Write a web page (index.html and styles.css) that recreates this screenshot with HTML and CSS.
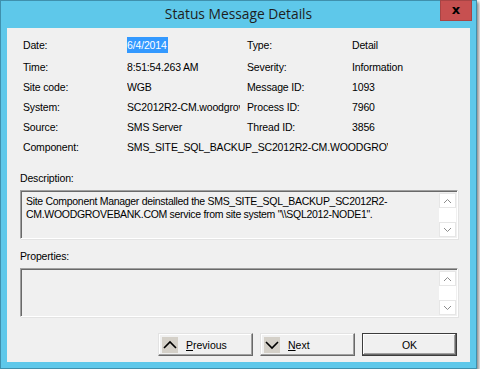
FILE: index.html
```html
<!DOCTYPE html>
<html lang="en">
  <head>
    <meta charset="UTF-8" />
    <title>Status Message Details</title>
    <link rel="stylesheet" href="styles.css">
  </head>
  <body>
    <div class="window">
      <div class="titlebar">
        <span class="title">Status Message Details</span>
        <span class="close-btn">x</span>
      </div>

      <div class="client">
        <div class="fields">
          <span class="label">Date:</span>
          <span class="value"><span class="selected">6/4/2014</span></span>
          <span class="label">Type:</span>
          <span class="value">Detail</span>

          <span class="label">Time:</span>
          <span class="value">8:51:54.263 AM</span>
          <span class="label">Severity:</span>
          <span class="value">Information</span>

          <span class="label">Site code:</span>
          <span class="value">WGB</span>
          <span class="label">Message ID:</span>
          <span class="value">1093</span>

          <span class="label">System:</span>
          <span class="value">SC2012R2-CM.woodgrovebank.com</span>
          <span class="label">Process ID:</span>
          <span class="value">7960</span>

          <span class="label">Source:</span>
          <span class="value">SMS Server</span>
          <span class="label">Thread ID:</span>
          <span class="value">3856</span>

          <span class="label">Component:</span>
          <span class="value wide">SMS_SITE_SQL_BACKUP_SC2012R2-CM.WOODGROVEBANK.COM</span>
        </div>

        <div class="section-label">Description:</div>
        <div class="textbox">
          <div class="textbox-text">
            Site Component Manager deinstalled the SMS_SITE_SQL_BACKUP_SC2012R2-CM.WOODGROVEBANK.COM service from site system "\\SQL2012-NODE1".
          </div>
          <div class="scrollbar">
            <span class="scroll-btn">
              <svg width="9" height="6" viewBox="0 0 9 6"><path d="M1 5 L4.5 1.5 L8 5" fill="none" stroke="#8c8c8c" stroke-width="1"/></svg>
            </span>
            <span class="scroll-track"></span>
            <span class="scroll-btn">
              <svg width="9" height="6" viewBox="0 0 9 6"><path d="M1 1 L4.5 4.5 L8 1" fill="none" stroke="#8c8c8c" stroke-width="1"/></svg>
            </span>
          </div>
        </div>

        <div class="section-label">Properties:</div>
        <div class="textbox">
          <div class="textbox-text"></div>
          <div class="scrollbar">
            <span class="scroll-btn">
              <svg width="9" height="6" viewBox="0 0 9 6"><path d="M1 5 L4.5 1.5 L8 5" fill="none" stroke="#8c8c8c" stroke-width="1"/></svg>
            </span>
            <span class="scroll-track"></span>
            <span class="scroll-btn">
              <svg width="9" height="6" viewBox="0 0 9 6"><path d="M1 1 L4.5 4.5 L8 1" fill="none" stroke="#8c8c8c" stroke-width="1"/></svg>
            </span>
          </div>
        </div>

        <div class="buttons">
          <button class="btn nav-btn">
            <span class="btn-icon">
              <svg width="16" height="16" viewBox="0 0 16 16"><path d="M2 11 L8 5 L14 11" fill="none" stroke="#000" stroke-width="1.6"/></svg>
            </span>
            <span><u>P</u>revious</span>
          </button>
          <button class="btn nav-btn">
            <span class="btn-icon">
              <svg width="16" height="16" viewBox="0 0 16 16"><path d="M2 5 L8 11 L14 5" fill="none" stroke="#000" stroke-width="1.6"/></svg>
            </span>
            <span><u>N</u>ext</span>
          </button>
          <button class="btn default-btn">OK</button>
        </div>
      </div>
    </div>
  </body>
</html>
```

FILE: styles.css
```css
* {
  margin: 0;
  padding: 0;
  box-sizing: border-box;
}

body {
  background: #ffffff;
  font-family: "Liberation Sans", Arial, sans-serif;
  font-size: 10.5px;
  letter-spacing: -0.15px;
  color: #000;
}

/* Window frame */
.window {
  width: 477px;
  height: 369px;
  border: 1px solid #3f90ad;
  background: #5ec8ea;
  padding: 27px 6px 6px 6px;
  position: relative;
  box-shadow: 2px 2px 3px rgba(0, 0, 0, 0.45);
}

.titlebar {
  position: absolute;
  top: 0;
  left: 0;
  right: 0;
  height: 27px;
  display: flex;
  align-items: center;
  justify-content: center;
}

.title {
  font-family: "Open Sans", "Noto Sans", sans-serif;
  font-size: 13.8px;
  letter-spacing: 0;
  color: #1e1e1e;
  margin-top: -2px;
}

.close-btn {
  position: absolute;
  top: -1px;
  right: 4px;
  width: 32px;
  height: 21px;
  background: #c75050;
  border: 1px solid #a84444;
  color: #000;
  font-family: "DejaVu Sans", sans-serif;
  font-weight: bold;
  font-size: 13px;
  letter-spacing: 0;
  line-height: 17px;
  text-align: center;
}

/* Client area */
.client {
  height: 100%;
  background: #f0f0f0;
  padding: 7px 12px 0 13px;
  display: flex;
  flex-direction: column;
}

.fields {
  display: grid;
  grid-template-columns: 104px 120px 105px 1fr;
  grid-template-rows: 22px repeat(5, 20px);
  line-height: 20px;
  padding-left: 3px;
}

.value {
  white-space: nowrap;
  overflow: hidden;
  max-width: 113px;
}

.wide {
  grid-column: 2 / span 3;
  max-width: none;
  width: 261px;
}

.selected {
  background: #3399ff;
  color: #fff;
  padding: 2px 1px 2px 0;
}

.section-label {
  line-height: 14px;
  margin-top: 14px;
  margin-bottom: 5px;
}

.section-label + .textbox + .section-label {
  margin-top: 10px;
}

.textbox {
  height: 49px;
  border-top: 1px solid #a0a0a0;
  border-left: 1px solid #a0a0a0;
  border-right: 1px solid #ffffff;
  border-bottom: 1px solid #ffffff;
  box-shadow: inset 1px 1px 0 #696969, 1px 1px 0 #e3e3e3;
  display: flex;
  padding: 2px 1px 1px 2px;
}

.textbox-text {
  flex: 1;
  padding: 2px 3px;
  line-height: 13px;
  letter-spacing: -0.3px;
}

.scrollbar {
  width: 17px;
  display: flex;
  flex-direction: column;
  background: #ffffff;
}

.scroll-btn {
  height: 15px;
  border: 1px solid #e6e6e6;
  display: flex;
  align-items: center;
  justify-content: center;
}

.scroll-track {
  flex: 1;
}

/* Buttons */
.buttons {
  display: flex;
  justify-content: flex-end;
  gap: 7px;
  margin-top: 16px;
  padding-right: 1px;
}

.btn {
  width: 95px;
  height: 23px;
  font-family: "Liberation Sans", Arial, sans-serif;
  font-size: 10.5px;
  background: #f0f0f0;
  border: 1px solid;
  border-color: #e3e3e3 #696969 #696969 #e3e3e3;
  box-shadow: inset -1px -1px 0 #a0a0a0, inset 1px 1px 0 #ffffff;
  color: #000;
}

.nav-btn {
  display: flex;
  align-items: center;
  gap: 8px;
  padding-left: 3px;
}

.btn-icon {
  width: 16px;
  height: 16px;
  background: #d4d0c8;
  display: flex;
}

.default-btn {
  border: 1px solid #3c3c3c;
  box-shadow: inset -1px -1px 0 #696969, inset 1px 1px 0 #ffffff, inset -2px -2px 0 #a0a0a0;
}
```
